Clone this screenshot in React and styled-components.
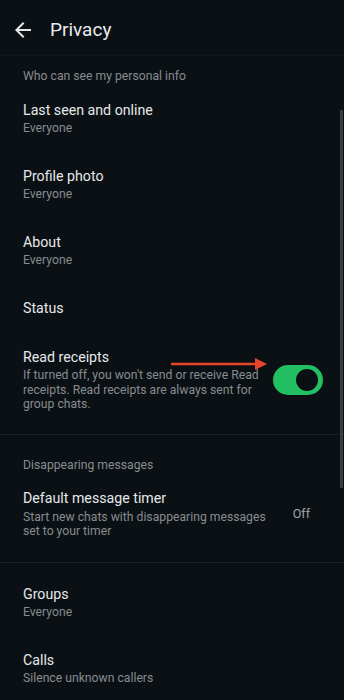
import React from 'react';
import styled, { createGlobalStyle } from 'styled-components';

const GlobalStyle = createGlobalStyle`
  html, body {
    margin: 0;
    padding: 0;
    background: #0b1014;
  }
  body {
    font-family: Roboto, "Noto Sans", "Liberation Sans", sans-serif;
    -webkit-font-smoothing: antialiased;
  }
`;

const Screen = styled.div`
  position: relative;
  width: 344px;
  height: 700px;
  overflow: hidden;
  background: #0b1014;
  color: #e6e8ea;
`;

const Header = styled.header`
  height: 56px;
  display: flex;
  align-items: center;
  padding: 4px 0 0 11px;
  box-sizing: border-box;
  border-bottom: 1px solid #12171b;
  gap: 15px;
`;

const BackButton = styled.button`
  display: flex;
  align-items: center;
  justify-content: center;
  width: 24px;
  height: 24px;
  padding: 0;
  border: 0;
  background: none;
  color: #e6e8ea;
`;

const Title = styled.h1`
  margin: 0;
  font-size: 19px;
  font-weight: 400;
  line-height: 24px;
  color: #e9ebed;
`;

const Section = styled.section`
  padding: ${(p) => p.$top || 0}px 0 ${(p) => p.$bottom || 0}px;
  border-bottom: ${(p) => (p.$last ? 'none' : '1px solid #1b2025')};
`;

const SectionLabel = styled.div`
  padding: ${(p) => p.$top}px 23px 0;
  font-size: 12.2px;
  line-height: 16px;
  color: #878c90;
`;

const Row = styled.div`
  display: flex;
  align-items: center;
  padding: 16.5px ${(p) => p.$right || 23}px 14.5px 23px;
  gap: 8px;
`;

const RowText = styled.div`
  flex: 1;
  min-width: 0;
  max-width: ${(p) => p.$max || 'none'};
`;

const RowTitle = styled.div`
  font-size: 14.2px;
  line-height: 18px;
  color: #e6e8ea;
`;

const RowSub = styled.div`
  margin-top: 2.5px;
  font-size: 12.2px;
  line-height: 14.5px;
  color: #878c90;
`;

const Value = styled.div`
  font-size: 12.5px;
  color: #a0a4a7;
  margin-left: auto;
`;

const Toggle = styled.div`
  flex: none;
  width: 50px;
  height: 30px;
  border-radius: 15px;
  background: ${(p) => (p.$on ? '#22c062' : '#3a3f44')};
  display: flex;
  align-items: center;
  justify-content: ${(p) => (p.$on ? 'flex-end' : 'flex-start')};
  padding: 0 5px;
  box-sizing: border-box;
`;

const Knob = styled.div`
  width: 22px;
  height: 22px;
  border-radius: 50%;
  background: #0b1014;
`;

const Scrollbar = styled.div`
  position: absolute;
  right: 1px;
  top: 110px;
  width: 3px;
  height: 378px;
  background: #3a3e42;
`;

const Annotation = styled.svg`
  position: absolute;
  left: 168px;
  top: 355px;
  pointer-events: none;
`;

const ArrowLeftIcon = () => (
  <svg width="24" height="24" viewBox="0 0 24 24" fill="currentColor">
    <path d="M20 11H7.83l5.59-5.59L12 4l-8 8 8 8 1.41-1.41L7.83 13H20v-2z" />
  </svg>
);

const Item = ({ title, sub, right, max, children }) => (
  <Row $right={right}>
    <RowText $max={max}>
      <RowTitle>{title}</RowTitle>
      {sub && <RowSub>{sub}</RowSub>}
    </RowText>
    {children}
  </Row>
);

export default function App() {
  return (
    <>
      <GlobalStyle />
      <Screen>
        <Header>
          <BackButton aria-label="Back">
            <ArrowLeftIcon />
          </BackButton>
          <Title>Privacy</Title>
        </Header>

        <Section $bottom={7.5}>
          <SectionLabel $top={12}>Who can see my personal info</SectionLabel>
          <Item title="Last seen and online" sub="Everyone" />
          <Item title="Profile photo" sub="Everyone" />
          <Item title="About" sub="Everyone" />
          <Item title="Status" />
          <Item
            title="Read receipts"
            sub="If turned off, you won't send or receive Read receipts. Read receipts are always sent for group chats."
            right={21}
          >
            <Toggle $on>
              <Knob />
            </Toggle>
          </Item>
        </Section>

        <Section $bottom={8.5}>
          <SectionLabel $top={22}>Disappearing messages</SectionLabel>
          <Item
            title="Default message timer"
            sub="Start new chats with disappearing messages set to your timer"
            right={34}
            max="246px"
          >
            <Value>Off</Value>
          </Item>
        </Section>

        <Section $top={5.5} $last>
          <Item title="Groups" sub="Everyone" />
          <Item title="Calls" sub="Silence unknown callers" />
        </Section>

        <Scrollbar />
        <Annotation width="104" height="18" viewBox="0 0 104 18">
          <line x1="3" y1="9" x2="90" y2="9" stroke="#e5452b" strokeWidth="2.5" />
          <polygon points="87,3 99,9 87,15" fill="#e5452b" />
        </Annotation>
      </Screen>
    </>
  );
}
